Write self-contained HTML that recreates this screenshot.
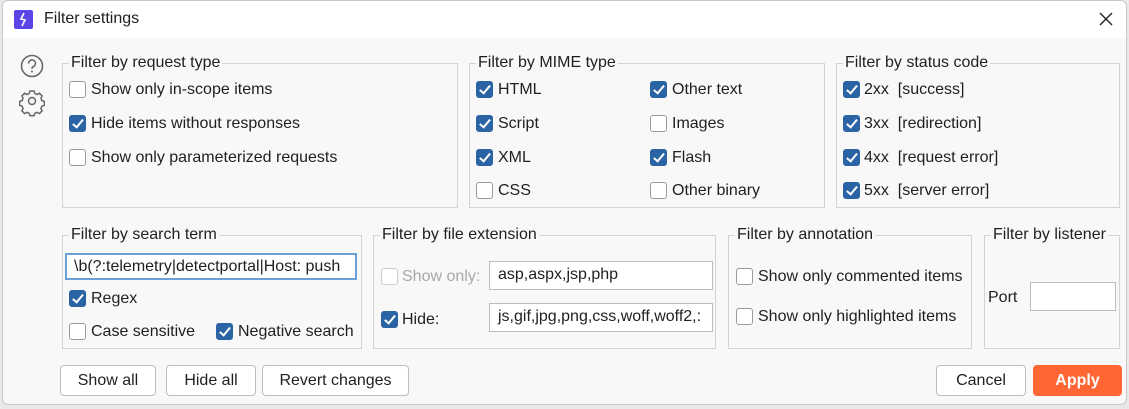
<!DOCTYPE html>
<html><head><style>
*{box-sizing:border-box;margin:0;padding:0}
body{width:1129px;height:409px;background:#e9e9e9;font-family:"Liberation Sans",sans-serif;font-size:16px;color:#1f1f1f;position:relative;overflow:hidden}
.win{position:absolute;left:2px;top:0;width:1125px;height:405px;background:#f8f8f8;border:1px solid #c8c8c8;border-radius:6px;overflow:hidden}
.tb{position:absolute;left:0;top:0;width:100%;height:37px;background:#fff}
.a{position:absolute;white-space:nowrap}
.g{position:absolute;border:1px solid #d4d4d4}
.gt{position:absolute;top:-11px;left:6px;background:#f8f8f8;padding:0 2px;line-height:20px}
.cb{position:absolute;width:17px;height:17px;border:1px solid #9a9a9a;border-radius:3px;background:#fff}
.cb.on{background:#2a64a4;border-color:#2a64a4}
.cb.on::after{content:"";position:absolute;left:5px;top:1px;width:4px;height:9px;border:solid #fff;border-width:0 2px 2px 0;transform:rotate(40deg)}
.cb.dis{border-color:#ccc}
.l{position:absolute;line-height:18px;white-space:nowrap}
.in{position:absolute;background:#fff;border:1px solid #bdbdbd;line-height:26px;padding-left:8px;white-space:nowrap;overflow:hidden}
.bt{position:absolute;height:31px;border:1px solid #bdbdbd;border-radius:4px;background:#fff;text-align:center;line-height:29px}
</style></head><body>
<div class="win">
<div class="tb">
<div class="a" style="left:11px;top:9px;width:19px;height:19px;background:#5b45e6;border-radius:2px"><svg width="19" height="19"><path d="M10 3 L7 9 L11 10 L8 16" stroke="#fff" stroke-width="1.6" fill="none"/></svg></div>
<div class="a" style="left:41px;top:9px;font-size:16px">Filter settings</div>
<svg class="a" style="left:1096px;top:11px" width="14" height="14"><path d="M1 1L13 13M13 1L1 13" stroke="#222" stroke-width="1.4"/></svg>
</div>
<svg class="a" style="left:16px;top:52px" width="26" height="64"><circle cx="13" cy="13" r="10.5" fill="none" stroke="#666" stroke-width="1.6"/><path d="M9.5 10.5a3.5 3.5 0 1 1 4.5 3.3c-1 .4-1 1-1 2" fill="none" stroke="#666" stroke-width="1.6"/><circle cx="13" cy="18.5" r="1" fill="#666"/>
<g transform="translate(13,48)" fill="none" stroke="#666" stroke-width="1.5"><circle r="3.5"/><path d="M-2 -10h4l.8 2.5 2.3 1 2.3-1.3 2.8 2.8-1.3 2.3 1 2.3 2.5.8v4l-2.5.8-1 2.3 1.3 2.3-2.8 2.8-2.3-1.3-2.3 1-.8 2.5h-4l-.8-2.5-2.3-1-2.3 1.3-2.8-2.8 1.3-2.3-1-2.3-2.5-.8v-4l2.5-.8 1-2.3-1.3-2.3 2.8-2.8 2.3 1.3 2.3-1z"/></g></svg>

<div class="g" style="left:59px;top:62px;width:396px;height:145px"><div class="gt">Filter by request type</div></div>
<div class="cb" style="left:66px;top:80px"></div><div class="l" style="left:88px;top:80px">Show only in-scope items</div>
<div class="cb on" style="left:66px;top:114px"></div><div class="l" style="left:88px;top:114px">Hide items without responses</div>
<div class="cb" style="left:66px;top:148px"></div><div class="l" style="left:88px;top:148px">Show only parameterized requests</div>

<div class="g" style="left:466px;top:62px;width:356px;height:145px"><div class="gt">Filter by MIME type</div></div>
<div class="cb on" style="left:473px;top:80px"></div><div class="l" style="left:495px;top:80px">HTML</div>
<div class="cb on" style="left:473px;top:114px"></div><div class="l" style="left:495px;top:114px">Script</div>
<div class="cb on" style="left:473px;top:148px"></div><div class="l" style="left:495px;top:148px">XML</div>
<div class="cb" style="left:473px;top:181px"></div><div class="l" style="left:495px;top:181px">CSS</div>
<div class="cb on" style="left:647px;top:80px"></div><div class="l" style="left:669px;top:80px">Other text</div>
<div class="cb" style="left:647px;top:114px"></div><div class="l" style="left:669px;top:114px">Images</div>
<div class="cb on" style="left:647px;top:148px"></div><div class="l" style="left:669px;top:148px">Flash</div>
<div class="cb" style="left:647px;top:181px"></div><div class="l" style="left:669px;top:181px">Other binary</div>

<div class="g" style="left:833px;top:62px;width:284px;height:145px"><div class="gt">Filter by status code</div></div>
<div class="cb on" style="left:840px;top:80px"></div><div class="l" style="left:861px;top:80px">2xx&nbsp; [success]</div>
<div class="cb on" style="left:840px;top:114px"></div><div class="l" style="left:861px;top:114px">3xx&nbsp; [redirection]</div>
<div class="cb on" style="left:840px;top:148px"></div><div class="l" style="left:861px;top:148px">4xx&nbsp; [request error]</div>
<div class="cb on" style="left:840px;top:181px"></div><div class="l" style="left:861px;top:181px">5xx&nbsp; [server error]</div>

<div class="g" style="left:59px;top:234px;width:300px;height:114px"><div class="gt">Filter by search term</div></div>
<div class="in" style="left:62px;top:252px;width:292px;height:27px;border:2px solid #6a9fd8;line-height:23px;padding-left:7px">\b(?:telemetry|detectportal|Host: push</div>
<div class="cb on" style="left:66px;top:289px"></div><div class="l" style="left:88px;top:289px">Regex</div>
<div class="cb" style="left:66px;top:322px"></div><div class="l" style="left:88px;top:322px">Case sensitive</div>
<div class="cb on" style="left:213px;top:322px"></div><div class="l" style="left:235px;top:322px">Negative search</div>

<div class="g" style="left:370px;top:234px;width:343px;height:114px"><div class="gt">Filter by file extension</div></div>
<div class="cb dis" style="left:378px;top:267px"></div><div class="l" style="left:399px;top:267px;color:#a8a8a8">Show only:</div>
<div class="in" style="left:486px;top:260px;width:224px;height:29px">asp,aspx,jsp,php</div>
<div class="cb on" style="left:378px;top:310px"></div><div class="l" style="left:399px;top:310px">Hide:</div>
<div class="in" style="left:486px;top:302px;width:224px;height:29px">js,gif,jpg,png,css,woff,woff2,:</div>

<div class="g" style="left:725px;top:234px;width:244px;height:114px"><div class="gt">Filter by annotation</div></div>
<div class="cb" style="left:733px;top:267px"></div><div class="l" style="left:755px;top:267px">Show only commented items</div>
<div class="cb" style="left:733px;top:307px"></div><div class="l" style="left:755px;top:307px">Show only highlighted items</div>

<div class="g" style="left:981px;top:234px;width:136px;height:114px"><div class="gt">Filter by listener</div></div>
<div class="l" style="left:985px;top:288px">Port</div>
<div class="in" style="left:1027px;top:281px;width:86px;height:29px"></div>

<div class="bt" style="left:57px;top:364px;width:96px">Show all</div>
<div class="bt" style="left:163px;top:364px;width:90px">Hide all</div>
<div class="bt" style="left:259px;top:364px;width:147px">Revert changes</div>
<div class="bt" style="left:933px;top:364px;width:90px">Cancel</div>
<div class="bt" style="left:1030px;top:364px;width:89px;background:#ff6633;border-color:#ff6633;color:#fff;font-weight:bold">Apply</div>
</div>
</body></html>
